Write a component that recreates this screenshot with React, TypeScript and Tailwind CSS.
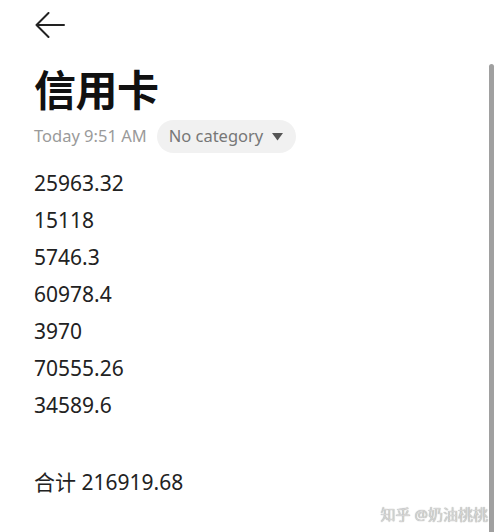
export default function App() {
  const nums = ["25963.32", "15118", "5746.3", "60978.4", "3970", "70555.26", "34589.6"];
  return (
    <div className="relative w-[500px] h-[532px] overflow-hidden bg-white" style={{ fontFamily: '"Noto Sans", "Noto Sans CJK SC", sans-serif' }}>
      <div className="flex flex-col pl-[34px]">
        <div className="pt-[12px] h-[38px]">
          <svg width="30" height="26" viewBox="0 0 30 26" className="ml-[1px]">
            <path d="M1.5 13 H29 M13.5 1 L1.5 13 L13.5 25" fill="none" stroke="#222" strokeWidth="2" strokeLinecap="round" strokeLinejoin="round" />
          </svg>
        </div>
        <div className="mt-[26px] h-[48px] leading-[48px] text-[42px] font-bold text-[#111] tracking-[-0.5px]" style={{ fontFamily: '"Noto Sans CJK SC", sans-serif' }}>
          信用卡
        </div>
        <div className="mt-[8px] flex items-center gap-[10px]">
          <span className="text-[16.5px] text-[#9a9a9a]">Today 9:51 AM</span>
          <div className="flex items-center h-[33px] rounded-full bg-[#f1f1f1] pl-[12px] pr-[13px] gap-[9px]">
            <span className="text-[16.5px] text-[#777]">No category</span>
            <svg width="11" height="8" viewBox="0 0 11 8"><path d="M0 0 H11 L5.5 7.5 Z" fill="#555" /></svg>
          </div>
        </div>
        <div className="mt-[12px] flex flex-col text-[21px] leading-[37px] text-[#222]">
          {nums.map((n) => (
            <div key={n}>{n}</div>
          ))}
          <div className="h-[37px]" />
          <div className="mt-[3px]">合计 216919.68</div>
        </div>
      </div>
      <div className="absolute left-[489px] top-[64px] w-[5px] h-[480px] rounded-t-full bg-[#a0a0a0]" />
      <div className="absolute right-[12px] bottom-[7px] text-[15px] text-[#d6d6d6]" style={{ textShadow: "0 0 1px #888" }}>
        知乎 @奶油桃桃
      </div>
    </div>
  );
}
